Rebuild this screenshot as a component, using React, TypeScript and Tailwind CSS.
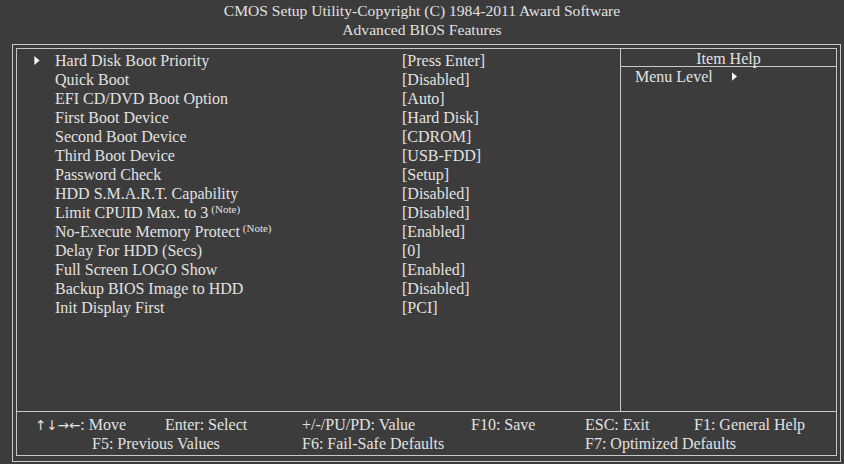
import React from 'react';

const rows: { label: string; value: string; note?: boolean; arrow?: boolean }[] = [
  { label: 'Hard Disk Boot Priority', value: '[Press Enter]', arrow: true },
  { label: 'Quick Boot', value: '[Disabled]' },
  { label: 'EFI CD/DVD Boot Option', value: '[Auto]' },
  { label: 'First Boot Device', value: '[Hard Disk]' },
  { label: 'Second Boot Device', value: '[CDROM]' },
  { label: 'Third Boot Device', value: '[USB-FDD]' },
  { label: 'Password Check', value: '[Setup]' },
  { label: 'HDD S.M.A.R.T. Capability', value: '[Disabled]' },
  { label: 'Limit CPUID Max. to 3', value: '[Disabled]', note: true },
  { label: 'No-Execute Memory Protect', value: '[Enabled]', note: true },
  { label: 'Delay For HDD (Secs)', value: '[0]' },
  { label: 'Full Screen LOGO Show', value: '[Enabled]' },
  { label: 'Backup BIOS Image to HDD', value: '[Disabled]' },
  { label: 'Init Display First', value: '[PCI]' },
];

function Tri({ className }: { className?: string }) {
  return (
    <svg viewBox="0 0 6 10" className={className}>
      <path d="M0 0 L6 5 L0 10 Z" fill="#f2f2f2" />
    </svg>
  );
}

export default function App() {
  return (
    <div className="w-[844px] h-[464px] bg-[#3c3c3c] text-[#e2e2e2] text-[16px] leading-[19px] font-['Liberation_Serif','Times_New_Roman',serif] overflow-hidden">
      {/* Title */}
      <div className="h-[44px] pt-[1px] flex flex-col items-center text-[15.6px]">
        <div>CMOS Setup Utility-Copyright (C) 1984-2011 Award Software</div>
        <div>Advanced BIOS Features</div>
      </div>

      {/* Double frame */}
      <div className="ml-[12px] w-[829px] h-[418px] border border-[#c8c8c8] pt-[3px] px-[3px] pb-[5px]">
        <div className="h-full border border-[#c8c8c8] flex flex-col">
          <div className="flex flex-1 min-h-0">
            {/* Settings list */}
            <div className="w-[604px] border-r border-[#c8c8c8] pt-[2px]">
              {rows.map((r) => (
                <div key={r.label} className="flex h-[19px] items-center">
                  <div className="w-[38px] flex justify-start pl-[17px]">
                    {r.arrow && <Tri className="w-[6px] h-[9px]" />}
                  </div>
                  <div className="w-[347px] h-[19px] whitespace-nowrap">
                    {r.label}
                    {r.note && (
                      <span className="text-[11px] leading-[11px] ml-[3px] relative -top-[5px]">(Note)</span>
                    )}
                  </div>
                  <div className="whitespace-nowrap">{r.value}</div>
                </div>
              ))}
            </div>

            {/* Item help */}
            <div className="flex-1">
              <div className="h-[18px] leading-[18px] text-center border-b border-[#c8c8c8] pt-[1px]">
                Item Help
              </div>
              <div className="flex items-center h-[19px] pl-[14px]">
                <span>Menu Level</span>
                <Tri className="w-[5px] h-[9px] ml-[19px]" />
              </div>
            </div>
          </div>

          {/* Footer */}
          <div className="h-[44px] border-t border-[#c8c8c8] pt-[3px] whitespace-nowrap">
            <div className="flex h-[19px] pl-[18px]">
              <span className="w-[130px]">
                <span className="font-['DejaVu_Sans',sans-serif] text-[13.5px]">↑↓→←</span>: Move
              </span>
              <span className="w-[137px]">Enter: Select</span>
              <span className="w-[169px]">+/-/PU/PD: Value</span>
              <span className="w-[114px]">F10: Save</span>
              <span className="w-[109px]">ESC: Exit</span>
              <span>F1: General Help</span>
            </div>
            <div className="flex h-[19px] pl-[75px]">
              <span className="w-[210px]">F5: Previous Values</span>
              <span className="w-[283px]">F6: Fail-Safe Defaults</span>
              <span>F7: Optimized Defaults</span>
            </div>
          </div>
        </div>
      </div>
    </div>
  );
}
